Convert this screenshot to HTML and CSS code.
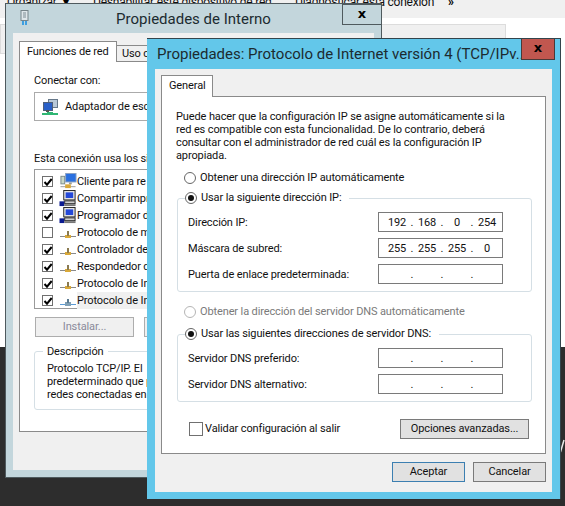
FILE: index.html
```html
<!DOCTYPE html>
<html lang="es">
<head>
    <meta charset="UTF-8">
    <title>Propiedades de Interno</title>
    <link rel="stylesheet" href="styles.css">
</head>
<body>
    <svg class="defs" width="0" height="0">
        <symbol id="tick" viewBox="0 0 12 12">
            <path d="M2.5 6 L5 8.7 L9.7 3" fill="none" stroke="#000" stroke-width="2"/>
        </symbol>
        <symbol id="proto" viewBox="0 0 18 14">
            <rect x="1" y="10" width="16" height="1" fill="#8a8a8a"/>
            <rect x="6" y="9" width="6" height="3" fill="#d9a93a"/>
            <rect x="8" y="5" width="2" height="5" fill="#8a7a50"/>
        </symbol>
        <symbol id="proto-sel" viewBox="0 0 18 14">
            <rect x="1" y="10" width="16" height="1" fill="#5b9bd5"/>
            <rect x="6" y="8" width="6" height="4" fill="#7f9fb5"/>
            <rect x="8" y="5" width="2" height="4" fill="#5a7a90"/>
        </symbol>
        <symbol id="pc" viewBox="0 0 18 18">
            <rect x="4.5" y="0.5" width="12" height="10" fill="#e4e4e4" stroke="#222"/>
            <rect x="6.5" y="2.5" width="8" height="6" fill="#2448d8"/>
            <rect x="5.5" y="11.5" width="11" height="3" fill="#d0d0d0" stroke="#222"/>
            <rect x="0" y="12" width="5" height="5" fill="#0a1a90"/>
            <rect x="5" y="15" width="12" height="2" fill="#777"/>
        </symbol>
        <symbol id="client" viewBox="0 0 18 18">
            <rect x="1.5" y="3.5" width="4" height="8" fill="#c8d8c8" stroke="#7a8a8a"/>
            <rect x="6.5" y="0.5" width="11" height="9" fill="#2a70e0" stroke="#8aa0c0"/>
            <rect x="10" y="10" width="3" height="2" fill="#999"/>
            <rect x="1" y="14" width="16" height="1" fill="#999"/>
            <rect x="6" y="12" width="6" height="4" fill="#d9a93a"/>
        </symbol>
        <symbol id="adapter" viewBox="0 0 16 16">
            <rect x="6.5" y="0.5" width="9" height="8" fill="#b8c8d8" stroke="#66788a"/>
            <rect x="1.5" y="3.5" width="9" height="8" fill="#2a60c8" stroke="#50607a"/>
            <rect x="4" y="11" width="3" height="2" fill="#555"/>
            <rect x="0" y="14" width="16" height="2" fill="#2fb673"/>
            <rect x="5" y="13" width="6" height="3" fill="#2fb673"/>
        </symbol>
    </svg>

    <div class="explorer">
        <div class="toolbar">
            <span class="tb-org">Organizar</span>
            <span class="tb-arrow">&#9662;</span>
            <span class="tb-dis">Deshabilitar este dispositivo de red</span>
            <span class="tb-diag">Diagnosticar esta conexión</span>
            <span class="tb-more">&raquo;</span>
        </div>
        <div class="explorer-body">
            <div class="details-box"></div>
        </div>
        <div class="taskbar"></div>
    </div>

    <svg class="wall-mark" width="5" height="14" viewBox="0 0 5 14">
        <path d="M0.5 13 L4 1" stroke="#e8e8e8" stroke-width="1.5" fill="none"/>
    </svg>

    <!-- ventana de atras -->
    <div class="window back">
        <div class="titlebar titlebar-center">
            <svg class="title-icon" width="9" height="16" viewBox="0 0 9 16">
                <rect x="1" y="0.5" width="7" height="10" fill="#dfe6ea" stroke="#77848a"/>
                <rect x="3" y="2" width="3" height="6" fill="#aeb9bf"/>
                <rect x="2" y="11" width="2" height="4" fill="#3f9fe0"/>
                <rect x="5" y="11" width="2" height="4" fill="#3f9fe0"/>
            </svg>
            <span class="title">Propiedades de Interno</span>
            <div class="close close-back"><span>x</span></div>
        </div>
        <div class="client">
            <div class="tabs">
                <div class="tab tab-on tab-wide">Funciones de red</div>
                <div class="tab tab-off">Uso c</div>
            </div>
            <div class="panel back-panel">
                <div>Conectar con:</div>
                <div class="adapter-box">
                    <svg width="16" height="16"><use href="#adapter"/></svg>
                    <span>Adaptador de esc</span>
                </div>
                <div class="list-label">Esta conexión usa los si</div>
                <div class="item-list">
                    <div class="item"><span class="check on"><svg width="12" height="12"><use href="#tick"/></svg></span><svg class="item-icon" width="18" height="17"><use href="#client"/></svg><span>Cliente para re</span></div>
                    <div class="item"><span class="check on"><svg width="12" height="12"><use href="#tick"/></svg></span><svg class="item-icon" width="18" height="17"><use href="#pc"/></svg><span>Compartir impre</span></div>
                    <div class="item"><span class="check on"><svg width="12" height="12"><use href="#tick"/></svg></span><svg class="item-icon" width="18" height="17"><use href="#pc"/></svg><span>Programador d</span></div>
                    <div class="item"><span class="check"></span><svg class="item-icon" width="18" height="14"><use href="#proto"/></svg><span>Protocolo de m</span></div>
                    <div class="item"><span class="check on"><svg width="12" height="12"><use href="#tick"/></svg></span><svg class="item-icon" width="18" height="14"><use href="#proto"/></svg><span>Controlador de</span></div>
                    <div class="item"><span class="check on"><svg width="12" height="12"><use href="#tick"/></svg></span><svg class="item-icon" width="18" height="14"><use href="#proto"/></svg><span>Respondedor d</span></div>
                    <div class="item"><span class="check on"><svg width="12" height="12"><use href="#tick"/></svg></span><svg class="item-icon" width="18" height="14"><use href="#proto"/></svg><span>Protocolo de In</span></div>
                    <div class="item item-sel"><span class="check on"><svg width="12" height="12"><use href="#tick"/></svg></span><svg class="item-icon" width="18" height="14"><use href="#proto-sel"/></svg><span>Protocolo de In</span></div>
                </div>
                <div class="back-buttons">
                    <div class="btn btn-off btn-install">Instalar...</div>
                    <div class="btn btn-off btn-install"></div>
                </div>
                <div class="desc-box">
                    <div class="desc-legend">Descripción</div>
                    <p class="desc-text">Protocolo TCP/IP. El<br>predeterminado que p<br>redes conectadas en</p>
                </div>
            </div>
        </div>
    </div>

    <!-- ventana de delante -->
    <div class="window front">
        <div class="titlebar">
            <span class="title">Propiedades: Protocolo de Internet versión 4 (TCP/IPv...</span>
            <div class="close close-front"><span>x</span></div>
        </div>
        <div class="client client-front">
            <div class="tabs tabs-front">
                <div class="tab tab-on tab-general">General</div>
            </div>
            <div class="panel front-panel">
                <p class="intro">Puede hacer que la configuración IP se asigne automáticamente si la<br>red es compatible con esta funcionalidad. De lo contrario, deberá<br>consultar con el administrador de red cuál es la configuración IP<br>apropiada.</p>

                <div class="radio-row first-radio"><span class="radio"></span>Obtener una dirección IP automáticamente</div>

                <div class="group group-ip">
                    <div class="legend"><span class="radio radio-on"></span>Usar la siguiente dirección IP:</div>
                    <div class="field">
                        <span>Dirección IP:</span>
                        <div class="ip"><span>192</span><i>.</i><span>168</span><i>.</i><span>0</span><i>.</i><span>254</span></div>
                    </div>
                    <div class="field">
                        <span>Máscara de subred:</span>
                        <div class="ip"><span>255</span><i>.</i><span>255</span><i>.</i><span>255</span><i>.</i><span>0</span></div>
                    </div>
                    <div class="field">
                        <span>Puerta de enlace predeterminada:</span>
                        <div class="ip"><span></span><i>.</i><span></span><i>.</i><span></span><i>.</i><span></span></div>
                    </div>
                </div>

                <div class="radio-row dns-radio disabled"><span class="radio"></span>Obtener la dirección del servidor DNS automáticamente</div>

                <div class="group group-dns">
                    <div class="legend"><span class="radio radio-on"></span>Usar las siguientes direcciones de servidor DNS:</div>
                    <div class="field">
                        <span>Servidor DNS preferido:</span>
                        <div class="ip"><span></span><i>.</i><span></span><i>.</i><span></span><i>.</i><span></span></div>
                    </div>
                    <div class="field">
                        <span>Servidor DNS alternativo:</span>
                        <div class="ip"><span></span><i>.</i><span></span><i>.</i><span></span><i>.</i><span></span></div>
                    </div>
                </div>

                <div class="validate-row">
                    <span class="check check-big"></span>
                    <span>Validar configuración al salir</span>
                    <div class="btn btn-options">Opciones avanzadas...</div>
                </div>
            </div>
            <div class="dialog-buttons">
                <div class="btn btn-dialog btn-default">Aceptar</div>
                <div class="btn btn-dialog">Cancelar</div>
            </div>
        </div>
    </div>
</body>
</html>
```

FILE: styles.css
```css
* {
    box-sizing: border-box;
}
html, body {
    margin: 0;
    height: 100%;
}
body {
    position: relative;
    overflow: hidden;
    background-color: #fff;
    color: #111;
    font-family: Roboto, "Noto Sans", sans-serif;
    font-size: 11px;
    letter-spacing: -0.12px;
    line-height: 14px;
}
p {
    margin: 0;
}
.defs {
    position: absolute;
}

/* fondo */
.explorer {
    display: flex;
    flex-direction: column;
    height: 506px;
}
.toolbar {
    display: flex;
    align-items: flex-end;
    height: 18px;
    flex: none;
    padding: 0 0 9px 7px;
    background-color: #f0f0f0;
    font-size: 12px;
    letter-spacing: -0.22px;
    white-space: nowrap;
    overflow: hidden;
}
.tb-org { width: 47px; }
.tb-arrow { margin-left: 9px; width: 8px; color: #000; }
.tb-dis { margin-left: 22px; width: 180px; }
.tb-diag { margin-left: 22px; width: 138px; }
.tb-more { margin-left: 15px; color: #000; font-weight: bold; }
.explorer-body {
    flex: 1;
    background-color: #fff;
    padding: 6px 59px 0 0;
}
.details-box {
    height: 30px;
    background-color: #f0f0f0;
    border: 1px solid #dcdcdc;
}
.taskbar {
    height: 159px;
    flex: none;
    background-color: #2d2d2d;
}
.wall-mark {
    position: absolute;
    left: 560px;
    top: 439px;
}

/* ventanas */
.window {
    position: absolute;
    display: flex;
    flex-direction: column;
}
.window.back {
    left: 5px;
    top: 3px;
    width: 377px;
    height: 475px;
    background-color: #c3d6dc;
    border: 1px solid #4f5a5e;
}
.window.front {
    left: 147px;
    top: 38px;
    width: 414px;
    height: 461px;
    background-color: #63c7ea;
    border-top: 1px solid #33444c;
    border-right: 1px solid #33444c;
}
.titlebar {
    position: relative;
    display: flex;
    align-items: center;
    flex: none;
    height: 29px;
}
.titlebar-center {
    justify-content: center;
}
.title {
    font-size: 15px;
    letter-spacing: 0;
    color: #1c2b30;
    white-space: nowrap;
}
.window.front .titlebar {
    height: 30px;
    padding-left: 10px;
}
.title-icon {
    position: absolute;
    left: 14px;
    top: 6px;
}
.close {
    position: absolute;
    top: 0;
    display: flex;
    align-items: center;
    justify-content: center;
    height: 21px;
    border: 1px solid #4f5a5e;
    font-family: "DejaVu Sans", sans-serif;
    font-size: 13px;
    font-weight: bold;
    line-height: 1;
    color: #000;
}
.close span {
    margin-top: -3px;
}
.close-back {
    right: -1px;
    width: 40px;
    background-color: #c3d6dc;
}
.close-front {
    right: 5px;
    width: 34px;
    background-color: #c1574f;
    border-color: #4a3a38;
    border-top: none;
}
.client {
    flex: 1;
    margin: 0 7px 7px 7px;
    padding: 8px 6px 0 6px;
    background-color: #f0f0f0;
    overflow: hidden;
}
.client-front {
    margin: 0 8px 7px 8px;
    padding: 7px 6px 0 6px;
}
.tabs {
    display: flex;
    align-items: flex-end;
    height: 21px;
    margin-bottom: -1px;
    position: relative;
}
.tab {
    height: 21px;
    border: 1px solid #8a8a8a;
    background-color: #fff;
    padding: 3px 7px 0 7px;
    white-space: nowrap;
}
.tab-on {
    border-bottom: none;
    position: relative;
    z-index: 1;
}
.tab-wide {
    width: 98px;
}
.tab-general {
    width: 52px;
    height: 22px;
}
.tab-off {
    width: 90px;
    height: 17px;
    padding: 1px 5px 0 5px;
    background-color: #f0f0f0;
    margin-left: -1px;
}
.panel {
    background-color: #fff;
    border: 1px solid #8a8a8a;
}
.back-panel {
    width: 346px;
    height: 371px;
    padding: 12px 14px;
}
.front-panel {
    height: 358px;
    padding: 13px 14px 0 14px;
}

/* ventana de atras */
.adapter-box {
    display: flex;
    align-items: center;
    gap: 7px;
    height: 29px;
    margin-top: 4px;
    padding-left: 7px;
    border: 1px solid #ababab;
    width: 300px;
}
.list-label {
    margin-top: 31px;
}
.item-list {
    width: 300px;
    height: 140px;
    margin-top: 3px;
    padding: 3px 0 0 7px;
    border: 1px solid #9a9a9a;
}
.item {
    display: flex;
    align-items: center;
    height: 17px;
    white-space: nowrap;
}
.item-icon {
    margin: 0 0 0 6px;
    width: 18px;
    flex: none;
}
.item-sel span:last-child {
    background-color: #f0f0f0;
    flex: 1;
    align-self: stretch;
    line-height: 17px;
}
.check {
    display: block;
    flex: none;
    width: 11px;
    height: 11px;
    border: 1px solid #707070;
    background-color: #fff;
    position: relative;
}
.check svg {
    display: block;
    margin: -1px;
}
.back-buttons {
    display: flex;
    gap: 10px;
    margin: 8px 0 0 1px;
}
.btn {
    display: flex;
    align-items: center;
    justify-content: center;
    height: 20px;
    border: 1px solid #7a7a7a;
    background-color: #e1e1e1;
    white-space: nowrap;
}
.btn-off {
    background-color: #f0f0f0;
    border-color: #adadad;
    color: #8a8a9a;
}
.btn-install {
    width: 99px;
}
.desc-box {
    width: 300px;
    height: 59px;
    margin-top: 14px;
    padding: 0 0 0 12px;
    border: 1px solid #d5dfe5;
    border-radius: 3px;
}
.desc-legend {
    width: fit-content;
    margin: -8px 0 0 -4px;
    padding: 0 4px;
    background-color: #fff;
    line-height: 15px;
}
.desc-text {
    line-height: 13px;
    margin-top: 3px;
    white-space: nowrap;
}

/* ventana de delante */
.intro {
    line-height: 13px;
    white-space: nowrap;
}
.radio-row {
    display: flex;
    align-items: center;
    height: 16px;
    padding-left: 8px;
    white-space: nowrap;
}
.first-radio {
    margin-top: 8px;
}
.dns-radio {
    margin-top: 12px;
}
.disabled {
    color: #7a7a7a;
}
.radio {
    display: block;
    flex: none;
    position: relative;
    width: 12px;
    height: 12px;
    margin-right: 4px;
    border: 1px solid #666;
    border-radius: 50%;
    background-color: #fff;
}
.disabled .radio {
    border-color: #b5b5b5;
}
.radio-on::after {
    content: "";
    position: absolute;
    left: 2px;
    top: 2px;
    width: 6px;
    height: 6px;
    border-radius: 50%;
    background-color: #111;
}
.group {
    margin: 0 0 0 1px;
    width: 355px;
    padding: 0 28px 0 10px;
    border: 1px solid #d5dfe5;
    border-radius: 3px;
}
.group-ip {
    margin-top: 12px;
    height: 94px;
}
.group-dns {
    margin-top: 14px;
    height: 68px;
}
.legend {
    display: flex;
    align-items: center;
    width: fit-content;
    height: 16px;
    margin: -9px 0 0 -3px;
    padding: 0 8px 0 0;
    background-color: #fff;
    white-space: nowrap;
}
.field {
    display: flex;
    align-items: center;
    justify-content: space-between;
    height: 20px;
    margin-top: 6px;
}
.field > span {
    padding-top: 1px;
}
.ip {
    display: flex;
    width: 125px;
    height: 20px;
    padding: 2px 0 0 7px;
    border: 1px solid #7a7a7a;
    background-color: #fff;
    line-height: 16px;
}
.ip span {
    width: 22px;
    text-align: center;
}
.ip i {
    width: 8px;
    font-style: normal;
    text-align: center;
}
.validate-row {
    display: flex;
    align-items: center;
    margin: 17px 2px 0 13px;
    height: 20px;
}
.check-big {
    width: 14px;
    height: 14px;
    margin-right: 2px;
}
.btn-options {
    width: 129px;
    margin-left: auto;
}
.dialog-buttons {
    display: flex;
    justify-content: flex-end;
    gap: 8px;
    margin-top: 8px;
}
.btn-dialog {
    width: 73px;
}
.btn-default {
    border-color: #3c7fb1;
}
```
